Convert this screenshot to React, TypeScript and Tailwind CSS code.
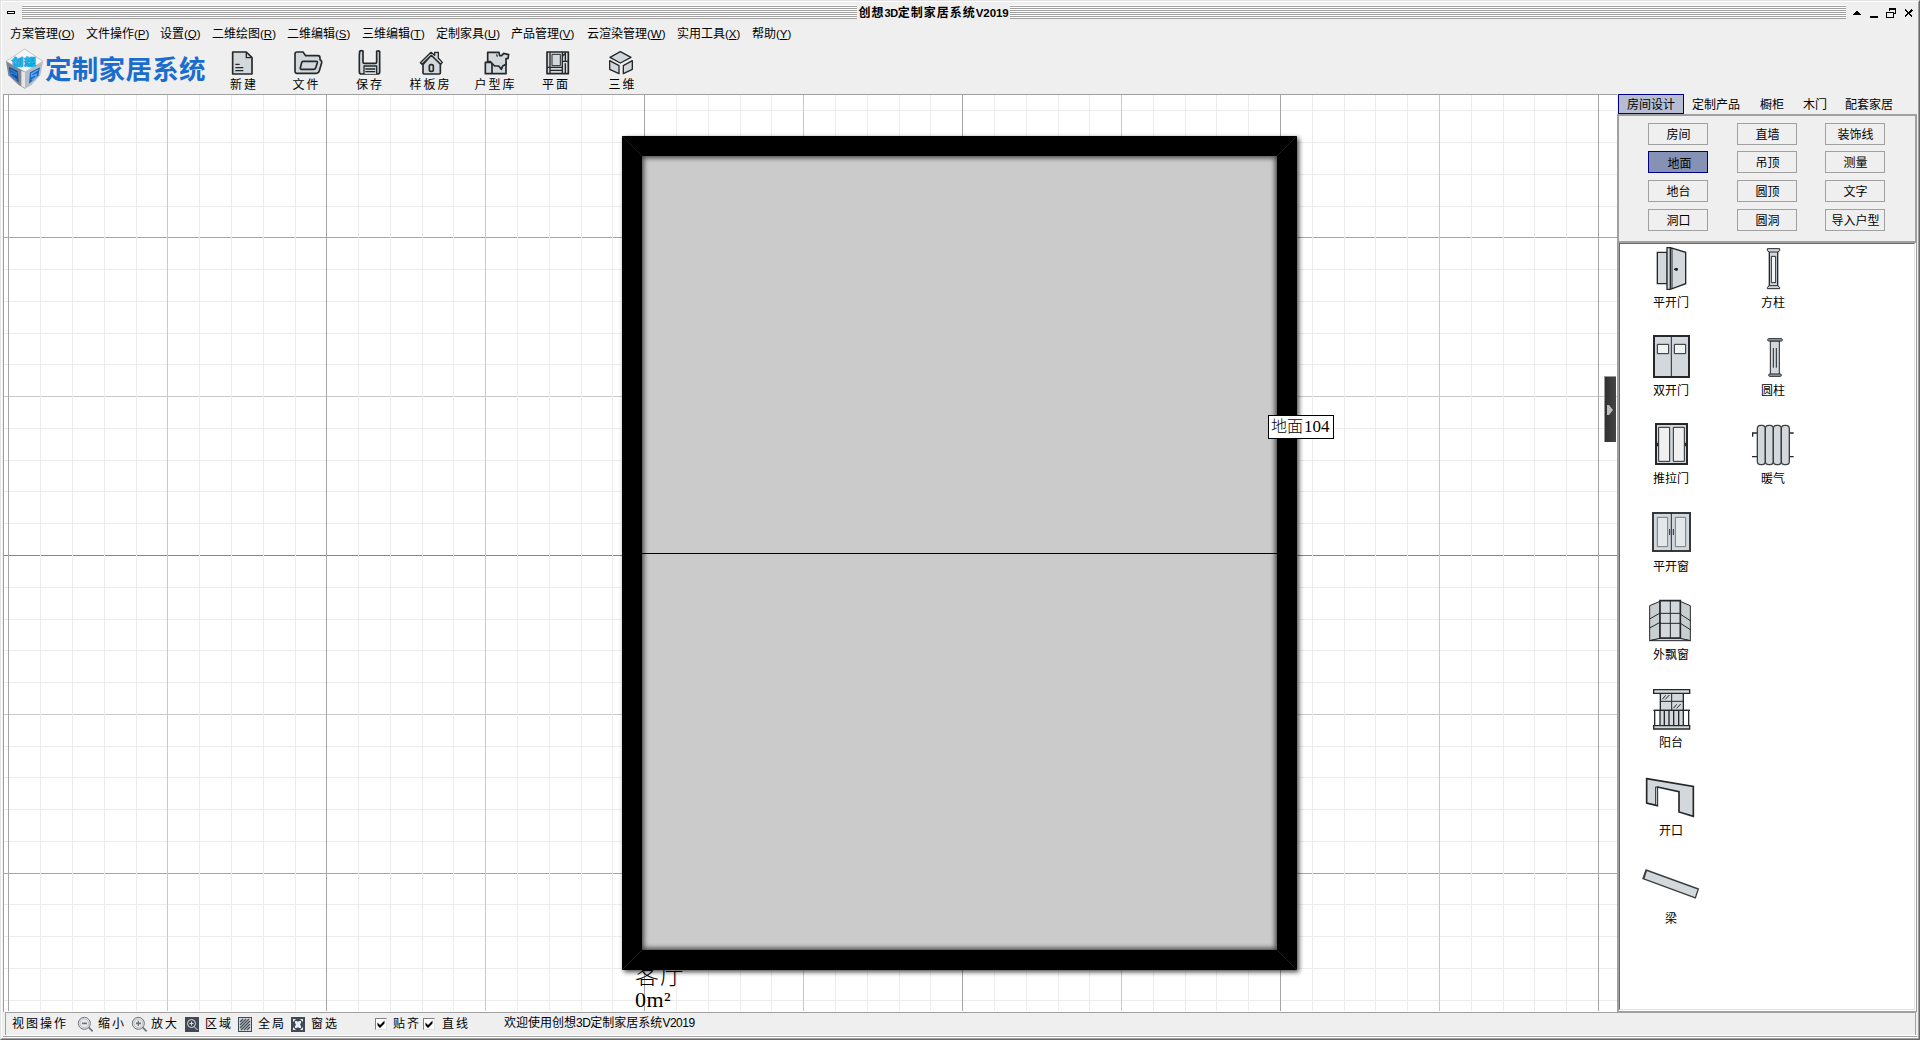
import type { ReactNode } from 'react';

const INK = '#25282b';
const FILL = '#d2d8dc';

const verticals = Array.from({ length: 51 }, (_, i) => ({ p: Math.floor(8.93 + i * 31.79), i }));
const horizontals = Array.from({ length: 29 }, (_, i) => ({ p: Math.floor(237.8 + (i - 4) * 31.77), i: i + 1 }));

const menus = [
  { label: '方案管理', key: 'O', w: 'w-[76px]' },
  { label: '文件操作', key: 'P', w: 'w-[74px]' },
  { label: '设置', key: 'Q', w: 'w-[52px]' },
  { label: '二维绘图', key: 'R', w: 'w-[75px]' },
  { label: '二维编辑', key: 'S', w: 'w-[75px]' },
  { label: '三维编辑', key: 'T', w: 'w-[74px]' },
  { label: '定制家具', key: 'U', w: 'w-[75px]' },
  { label: '产品管理', key: 'V', w: 'w-[76px]' },
  { label: '云渲染管理', key: 'W', w: 'w-[90px]' },
  { label: '实用工具', key: 'X', w: 'w-[75px]' },
  { label: '帮助', key: 'Y', w: 'w-[50px]' },
];

function Stripes({ className }: { className: string }) {
  return (
    <div
      className={`h-[14px] bg-[repeating-linear-gradient(to_bottom,#ffffff_0px,#ffffff_1px,#a0a0a0_1px,#a0a0a0_2px)] ${className}`}
    />
  );
}

function TitleBar() {
  return (
    <div className="flex h-[22px] items-start pt-[3px]">
      <div className="mt-[6px] ml-[5px] h-[3px] w-2 border border-black bg-white" />
      <Stripes className="ml-[7px] w-[835px]" />
      <div className="flex h-[14px] w-[153px] items-center justify-center pt-px text-[12px] font-bold leading-[14px] tracking-[1px]">
        创想<span className="text-[11px] tracking-[-0.4px]">3D</span>定制家居系统<span className="text-[11.5px] tracking-[-0.1px]">V2019</span>
      </div>
      <Stripes className="w-[836px]" />
      <svg className="h-[16px] w-[71px]" viewBox="738 15 213 48" shapeRendering="crispEdges">
        <path d="M759 45v-3h3v-3h3v-3h3v-3h6v3h3v3h3v3h3v3z" />
        <path d="M810 48h24v6h-24z" />
        <path d="M867 26h20v14h-6M867 26v8M859 37h21v14h-21z" fill="none" stroke="#000" strokeWidth="3" />
        <path d="M867 24h21v5h-21zM858 35h23v5h-23z" />
        <path d="M915 29l22 21M937 29l-22 21" fill="none" stroke="#000" strokeWidth="5" />
      </svg>
    </div>
  );
}

function MenuBar() {
  return (
    <div className="flex h-5 items-center pl-[8px] text-[12px] leading-5">
      {menus.map((m) => (
        <div key={m.key} className={`${m.w} shrink-0 whitespace-nowrap`}>
          {m.label}
          <span className="font-['Liberation_Sans'] text-[11.5px]">
            (<span className="underline underline-offset-1">{m.key}</span>)
          </span>
        </div>
      ))}
    </div>
  );
}

function Logo() {
  return (
    <div className="flex w-[210px] items-start pt-1 pl-[3px]">
      <svg className="h-[42px] w-[39px]" viewBox="15 144 117 126">
        <path d="M18 184l56-37 55 37-54 32z" fill="#f4f6f8" stroke="#a9b0b7" strokeWidth="2" />
        <path d="M18 184l57 32v50l-19-11-31-29z" fill="#7f8890" />
        <path d="M129 184l-54 32v50l19-11 27-29z" fill="#b5bcc3" />
        <path d="M64 212l11 5v47l-11-6z" fill="#e4e8eb" />
        <path d="M27 200l26 13 3 34-26-21z" fill="#124f9f" />
        <path d="M31 209l18 10v6l-16-8v9l18 15" fill="none" stroke="#2f7fdc" strokeWidth="4" />
        <path d="M120 202l-30 15-3 34 28-24z" fill="#1767c4" />
        <path d="M114 210l-19 11v8l13-6v8l-13 9" fill="none" stroke="#67a9ee" strokeWidth="4" />
        <text transform="translate(34 198) scale(1 0.86)" fontSize="37" fontWeight="900" fill="#20c4ee" stroke="#0b9ada" strokeWidth="2">
          创想
        </text>
      </svg>
      <div className="mt-[5px] ml-[1px] text-[26.5px] font-bold leading-[34px] tracking-[0.3px] text-[#1b6dcd]">定制家居系统</div>
    </div>
  );
}

interface ToolProps {
  label: string;
  width: string;
  viewBox: string;
  children: ReactNode;
}

function Tool({ label, width, viewBox, children }: ToolProps) {
  return (
    <div className={`flex shrink-0 flex-col items-center pt-1 ${width}`}>
      <svg className="h-[30px] w-full" viewBox={viewBox} fill={FILL} stroke={INK} strokeWidth="5" strokeLinejoin="round">
        {children}
      </svg>
      <span className="mt-px pl-[2px] text-[12px] leading-[13px] tracking-[2px]">{label}</span>
    </div>
  );
}

function ToolBar() {
  return (
    <div className="flex h-[50px]">
      <Logo />
      <Tool label="新建" width="w-[62px]" viewBox="636 144 186 90">
        <path d="M698 156h41l17 17v49h-58z" />
        <path d="M739 156v17h17" fill="none" strokeWidth="4" />
        <path d="M706 193h13M706 203h24M706 212h24" strokeWidth="4" />
      </Tool>
      <Tool label="文件" width="w-[63px]" viewBox="822 144 189 90">
        <path d="M891 220q-6 0-6-6v-52q0-6 6-6h18l8 11h37q6 0 6 7v5q6 2 5 9l-7 24q-2 8-9 8z" />
        <path d="M909 184h40q4 0 3 4l-5 16q-1 4-6 4h-38q-3 0-2-4l4-16q1-4 4-4z" />
      </Tool>
      <Tool label="保存" width="w-[64px]" viewBox="1011 144 192 90">
        <path d="M1079 154q4-4 10-1v32q0 5 5 5h31q5 0 5-5v-31q5-3 9 0v62q0 6-6 6h-49q-6 0-6-6v-51q1-6 1-11z" />
        <path d="M1099 151h8v23h-8zM1119 152v22" fill="none" strokeWidth="4" stroke="#efefef" />
        <path d="M1092 222v-24h38v24M1096 207h30M1096 215h30" strokeWidth="4" />
      </Tool>
      <Tool label="样板房" width="w-[57px]" viewBox="3 144 171 90">
        <path d="M69 193v26q0 3 3 3h46q3 0 3-3v-27l-27-27z" />
        <path d="M61 188l32-31 11 9v-9h11v17l12 13-5 6-28-27-28 27z" strokeWidth="4" />
        <rect x="88" y="194" width="12" height="20" rx="5" />
      </Tool>
      <Tool label="户型库" width="w-[73px]" viewBox="174 144 219 90">
        <path d="M256 187h62v34h-62z" />
        <path d="M276 187v34" fill="none" />
        <path d="M263 157h34l2 10h6l6-7 15 4-2 12h-6v17l-10 5-4 10-8-10h-12l-13-13h-8z" />
        <path d="M290 163l2 7" fill="none" strokeWidth="4" />
      </Tool>
      <Tool label="平面" width="w-[48px]" viewBox="393 144 144 90">
        <path d="M441 156h64v65h-64z" />
        <path d="M450 156v65M450 202h37M450 211h37M487 156v65M496 190v31M487 184h18M487 169l9-9M496 156v28M441 202h9" fill="none" strokeWidth="4" />
        <path d="M456 163h25v34h-25z" strokeWidth="3" />
      </Tool>
      <Tool label="三维" width="w-[85px]" viewBox="537 144 255 90">
        <path d="M630 172l31-17 32 17-32 17z" strokeWidth="4" />
        <path d="M629 182l28 15v24l-28-13z" strokeWidth="4" />
        <path d="M697 182l-27 15v24l27-13z" strokeWidth="4" />
      </Tool>
    </div>
  );
}

function lineColor(i: number, center: boolean) {
  if (center) return '#858585';
  if (i % 10 === 0) return '#a6a6a6';
  return i % 5 === 0 ? '#c9c9c9' : '#ececec';
}

function Canvas() {
  const order = (a: { i: number }, b: { i: number }) => Number(a.i % 5 === 0) - Number(b.i % 5 === 0);
  return (
    <div className="relative w-[1614px] shrink-0 overflow-hidden border-t border-l border-[#a0a0a0] bg-white">
      <svg className="block h-[917px] w-[1613px]" viewBox="4 95 1613 917">
        <g shapeRendering="crispEdges">
          {[...horizontals].sort(order).map(({ p, i }) => (
            <rect key={`h${p}`} x="4" y={p} width="1613" height="1" fill={lineColor(i + 5, i === 15)} />
          ))}
          {[...verticals].sort(order).map(({ p, i }) => (
            <rect key={`v${p}`} x={p} y="95" width="1" height="916" fill={lineColor(i, false)} />
          ))}
        </g>
        <defs>
          <filter id="soft" x="-5%" y="-5%" width="110%" height="110%">
            <feGaussianBlur stdDeviation="2.4" />
          </filter>
          <clipPath id="floor">
            <rect x="642" y="156" width="635" height="794" />
          </clipPath>
        </defs>
        <rect x="624" y="138" width="675" height="834" fill="#000" opacity="0.72" filter="url(#soft)" />
        <rect x="642" y="156" width="635" height="794" fill="#cbcbcb" />
        <rect x="634" y="148" width="651" height="810" fill="none" stroke="#000" strokeWidth="20" opacity="0.65" filter="url(#soft)" clipPath="url(#floor)" />
        <path d="M622 136h675v834h-675zM642 156v794h635v-794z" fillRule="evenodd" />
        <rect x="642" y="553" width="635" height="1" />
        <path d="M622 136l20 20M1297 136l-20 20M622 970l20-20M1297 970l-20-20" stroke="#2b2b2b" strokeWidth="0.7" />
      </svg>
      <div className="absolute top-[868px] left-[631px] w-[80px]">
        <div className="text-[24px] font-light leading-[26px] tracking-[1px]">客厅</div>
        <div className="font-['Liberation_Serif'] text-[22px] leading-[22px] tracking-[0.5px]">0m²</div>
      </div>
      <div className="absolute top-[320px] left-[1264px] flex h-6 w-[66px] items-center border border-black bg-white pl-[2px] text-[16px] font-light">
        地面<span className="ml-[1px] font-['Liberation_Serif'] text-[17px]">104</span>
      </div>
      <div className="absolute top-[281px] left-[1600px] flex h-[66px] w-[12px] items-center border-t border-l border-[#9a9a9a] bg-linear-to-r from-[#303030] to-[#464646]">
        <svg className="mt-px ml-px h-3 w-2" viewBox="0 0 8 12">
          <path d="M1 1h2l4 5-4 5H1z" fill="#bdbdbd" />
        </svg>
      </div>
    </div>
  );
}

function PanelButton({ label, active = false }: { label: string; active?: boolean }) {
  return (
    <div
      className={`flex h-[22px] w-[60px] items-center justify-center border text-[12px] leading-5 ${
        active ? 'border-[#000080] bg-[#8592b5] pt-[3px] pl-[3px]' : 'border-[#a0a0a0] pt-px pl-px'
      }`}
    >
      {label}
    </div>
  );
}

const panelRows = [
  { items: ['房间', '直墙', '装饰线'], gap: 'mt-[7px]' },
  { items: ['地面', '吊顶', '测量'], gap: 'mt-[6px]' },
  { items: ['地台', '圆顶', '文字'], gap: 'mt-[7px]' },
  { items: ['洞口', '圆洞', '导入户型'], gap: 'mt-[7px]' },
];

function Item({ label, viewBox, children }: { label: string; viewBox: string; children: ReactNode }) {
  return (
    <div className="flex h-[88px] w-[102px] flex-col items-center">
      <svg className="h-[50px] w-[102px]" viewBox={viewBox} fill={FILL} stroke={INK} strokeWidth="4">
        {children}
      </svg>
      <span className="mt-px text-[12px] leading-4">{label}</span>
    </div>
  );
}

function ItemList() {
  return (
    <div className="flex h-[766px]">
      <div>
        <Item label="平开门" viewBox="60 12 306 150">
          <path d="M172 37h30v94h-30z" />
          <path d="M201 23h10v125h-10zM211 23l46 14v94l-46 17z" />
          <path d="M216 26v120" strokeWidth="3" />
          <path d="M222 88h12" />
          <circle cx="229" cy="88" r="3" fill={INK} />
        </Item>
        <Item label="双开门" viewBox="60 276 306 150">
          <path d="M162 288h105v123H162z" strokeWidth="6" />
          <path d="M214 288v123" strokeWidth="3" />
          <path d="M172 313h34v28h-34zM223 313h34v28h-34z" fill="#f1f3f3" strokeWidth="3" />
        </Item>
        <Item label="推拉门" viewBox="60 540 306 150">
          <path d="M168 552h93v120h-93z" strokeWidth="6" />
          <path d="M176 562h33v102h-33zM220 562h33v102h-33z" fill="#f0f0f0" strokeWidth="3" />
          <path d="M172 608v11M257 608v11" strokeWidth="5" />
        </Item>
        <Item label="平开窗" viewBox="60 24 306 150">
          <path d="M159 39h111v114H159z" strokeWidth="6" stroke="#36393b" />
          <path d="M214 39v114" strokeWidth="3" />
          <path d="M172 52h31v88h-31zM226 52h31v88h-31z" fill="#e2e7ea" stroke="#737b80" strokeWidth="3" />
          <path d="M209 87v18M220 87v18" strokeWidth="3" />
        </Item>
        <Item label="外飘窗" viewBox="60 288 306 150">
          <path d="M149 317l31-13v112l-31 6zM271 317l-31-13v112l31 6z" strokeWidth="3" fill="#c9ced1" />
          <path d="M149 422l31-7h60l31 7z" strokeWidth="3" />
          <path d="M180 302h61v112h-61z" strokeWidth="5" />
          <path d="M211 302v112M180 340h61M180 370h61M149 357l31-18M149 384l31-17M271 362l-31-20M271 389l-31-20" strokeWidth="3" />
        </Item>
        <Item label="阳台" viewBox="60 552 306 150">
          <path d="M181 578h69v55h-69z" />
          <path d="M161 569h108v11H161z" strokeWidth="4" />
          <path d="M215 580v50M181 604h69M187 598l10-12M196 598l12-13M220 625l10-12M230 625l12-13" strokeWidth="3" />
          <path d="M164 631h102v48H164z" fill="#fff" strokeWidth="4" />
          <path d="M180 633h70v44h-70z" stroke="none" />
          <path d="M180 631v46M193 631v46M207 631v46M221 631v46M236 631v46M250 631v46M160 631h110" strokeWidth="4" />
          <path d="M161 677h108v10H161z" strokeWidth="4" />
        </Item>
        <Item label="开口" viewBox="60 96 306 150">
          <path d="M140 116l140 23v90l-43-13v-61l-65-14v56l-32-8z" strokeWidth="5" />
          <path d="M167 140v57" strokeWidth="3" />
          <path d="M170 144v50" stroke="#fff" strokeWidth="2" />
        </Item>
        <Item label="梁" viewBox="60 360 306 150">
          <path d="M138 390l157 57-9 27-157-58z" stroke="#3b3e40" />
          <path d="M139 391l-8 25" strokeWidth="5" stroke="#3b3e40" />
        </Item>
      </div>
      <div>
        <Item label="方柱" viewBox="366 12 306 150">
          <path d="M508 34h25v107h-25z" />
          <path d="M502 26h37v6l-6 4h-25l-6-4zM502 146h37v-4l-6-5h-25l-6 5z" strokeWidth="3" />
          <path d="M514 49h13v79h-13z" fill="#f4f4f4" strokeWidth="3" />
        </Item>
        <Item label="圆柱" viewBox="366 276 306 150">
          <path d="M511 303h27v101h-27z" strokeWidth="3" />
          <rect x="503" y="296" width="44" height="7" rx="3" fill="#9fa5a9" strokeWidth="3" />
          <rect x="506" y="402" width="38" height="7" rx="3" fill="#9fa5a9" strokeWidth="3" />
          <path d="M520 324v59M529 324v59" strokeWidth="3" />
        </Item>
        <Item label="暖气" viewBox="366 540 306 150">
          <path d="M458 590v-11h14M456 650h16M568 579h13M568 650h13" fill="none" strokeWidth="4" />
          <rect x="472" y="556" width="24" height="118" rx="10" stroke="#3c4043" />
          <rect x="496" y="556" width="24" height="118" rx="10" stroke="#3c4043" />
          <rect x="520" y="556" width="24" height="118" rx="10" stroke="#3c4043" />
          <rect x="544" y="556" width="24" height="118" rx="10" stroke="#3c4043" />
        </Item>
      </div>
    </div>
  );
}

function SidePanel() {
  return (
    <div className="flex h-[918px] w-[300px] shrink-0 flex-col">
      <div className="flex h-5 text-[12px] leading-[22px]">
        <div className="ml-px flex w-[66px] justify-center border border-[#000080] bg-[#b6bdd2] leading-5">房间设计</div>
        <div className="ml-2 w-[68px]">定制产品</div>
        <div className="w-[43px]">橱柜</div>
        <div className="w-[42px]">木门</div>
        <div>配套家居</div>
      </div>
      <div className="h-[129px] border-2 border-[#a0a0a0]">
        {panelRows.map((row) => (
          <div key={row.items[0]} className={`flex pl-[29px] ${row.gap}`}>
            <PanelButton label={row.items[0]} active={row.items[0] === '地面'} />
            <div className="w-[29px]" />
            <PanelButton label={row.items[1]} />
            <div className="w-[28px]" />
            <PanelButton label={row.items[2]} />
          </div>
        ))}
      </div>
      <div className="h-[769px] border-r border-b border-l-2 border-[#a0a0a0] bg-white pr-px pb-px">
        <div className="h-[767px] border-t border-r border-b border-l border-t-[#696969] border-r-[#e3e3e3] border-b-[#e3e3e3] border-l-[#696969]">
          <ItemList />
        </div>
      </div>
    </div>
  );
}

function Magnifier({ plus = false }: { plus?: boolean }) {
  return (
    <svg className="h-4 w-[17px]" viewBox="231 228 51 48" fill="none" stroke="#6d737c" strokeWidth="4">
      <circle cx="253" cy="250" r="18" fill="#e8eaec" strokeWidth="3" />
      <circle cx="253" cy="250" r="13" stroke="#a4a9b0" strokeWidth="2" />
      <path d="M246 250h15M266 262l12 12" strokeWidth="5" />
      {plus && <path d="M253 242v16" strokeWidth="4" />}
    </svg>
  );
}

function Check() {
  return (
    <div className="h-3 w-3 border border-t-[#808080] border-r-[#e3e3e3] border-b-[#e3e3e3] border-l-[#808080] bg-white">
      <svg className="h-[10px] w-[10px]" viewBox="0 0 10 10">
        <path d="M1.5 3.5v3L4 9l4.500-4.500v-3L4 6z" />
      </svg>
    </div>
  );
}

function StatusBar() {
  return (
    <div className="ml-[3px] flex h-[23px] w-[1911px] items-center border-t border-r border-l border-[#a0a0a0] text-[12px] leading-5 tracking-[2px] whitespace-nowrap">
      <div className="ml-[6px] w-[65px]">视图操作</div>
      <Magnifier />
      <div className="ml-[4px] w-[33px]">缩小</div>
      <Magnifier plus />
      <div className="ml-[3px] w-[34px]">放大</div>
      <svg className="h-[15px] w-[14px]" viewBox="0 0 14 15" fill="none" stroke="#dfe3e8">
        <rect width="14" height="15" fill="#414956" stroke="none" />
        <circle cx="6.500" cy="6.500" r="4" />
        <path d="M4.500 6.500h4M6.500 4.500v4M9.500 10l3 3" />
      </svg>
      <div className="ml-[6px] w-[33px]">区域</div>
      <svg className="h-[15px] w-[14px]" viewBox="0 0 14 15" stroke="#414956">
        <rect x="0.500" y="0.500" width="13" height="14" fill="#d4d7db" />
        <path d="M2 5l3-3M2 8l6-6M2 11l9-9M3 13l9-9M6 13l6-6M9 13l3-3" strokeWidth="1.3" />
      </svg>
      <div className="ml-[6px] w-[33px]">全局</div>
      <svg className="h-[15px] w-[14px]" viewBox="0 0 14 15">
        <rect width="14" height="15" fill="#414956" />
        <path d="M4 4h2l1 1 1-1h2v2L9 7.500 10 9v2H8l-1-1-1 1H4V9l1-1.500L4 6z" fill="#eceef0" />
        <path d="M2 2h3L2 5zM12 2H9l3 3zM2 13h3l-3-3zM12 13H9l3-3z" fill="#eceef0" />
      </svg>
      <div className="ml-[6px] w-[64px]">窗选</div>
      <Check />
      <div className="ml-[6px] w-[30px]">贴齐</div>
      <Check />
      <div className="ml-[7px] w-[62px]">直线</div>
      <div className="-mt-[2px] tracking-normal">
        欢迎使用创想<span className="tracking-[-0.5px]">3D</span>定制家居系统<span className="tracking-[-0.5px]">V2019</span>
      </div>
    </div>
  );
}

export default function App() {
  return (
    <div
      lang="zh-CN"
      className="h-[1040px] w-[1920px] overflow-hidden border border-t-[#e3e3e3] border-r-[#696969] border-b-[#696969] border-l-[#e3e3e3] bg-[#efefef] font-['Liberation_Sans','Noto_Sans_CJK_SC',sans-serif] text-black"
    >
      <div className="flex h-[1038px] flex-col border border-t-white border-r-[#a0a0a0] border-b-[#a0a0a0] border-l-white">
        <TitleBar />
        <MenuBar />
        <ToolBar />
        <div className="ml-px flex h-[918px] shrink-0">
          <Canvas />
          <SidePanel />
        </div>
        <StatusBar />
        <div className="ml-px h-[3px] w-[1914px] border-t border-b border-t-white border-b-white bg-[#a0a0a0]" />
      </div>
    </div>
  );
}
